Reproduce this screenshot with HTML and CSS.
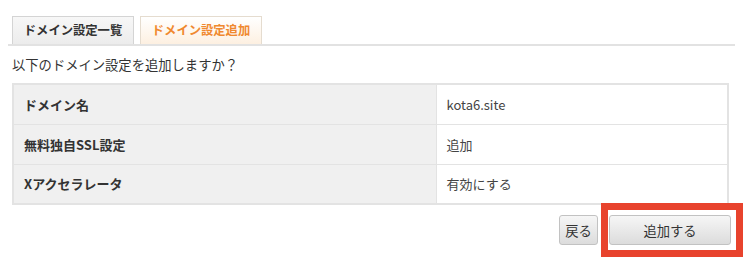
FILE: index.html
```html
<!DOCTYPE html>
<html lang="ja">
<head>
<meta charset="utf-8">
<link rel="stylesheet" href="styles.css">
</head>
<body>
<div class="page">
  <div class="tabs">
    <div class="tab tab-list">ドメイン設定一覧</div>
    <div class="tab tab-active">ドメイン設定追加</div>
  </div>
  <p class="message">以下のドメイン設定を追加しますか？</p>
  <table class="confirm">
    <tr><th>ドメイン名</th><td>kota6.site</td></tr>
    <tr><th>無料独自SSL設定</th><td>追加</td></tr>
    <tr><th>Xアクセラレータ</th><td>有効にする</td></tr>
  </table>
  <div class="actions">
    <button class="btn btn-back">戻る</button>
    <button class="btn btn-add">追加する</button>
    <span class="highlight"></span>
  </div>
</div>
</body>
</html>
```
FILE: styles.css
```css
* { box-sizing: border-box; }
html, body { margin: 0; padding: 0; background: #fff; }
body {
  font-family: "Noto Sans CJK JP", "Noto Sans", sans-serif;
  color: #333;
  width: 750px;
  height: 277px;
  overflow: hidden;
}
.page { padding: 16px 0 0 8px; width: 735px; }
.tabs {
  display: flex;
  gap: 6px;
  padding-left: 4px;
  border-bottom: 2px solid #e2e2e2;
  height: 30px;
}
.tab {
  height: 28px;
  padding: 0 8px;
  border: 1px solid #d4d4d4;
  border-bottom: none;
  font-size: 12.3px;
  font-weight: bold;
  line-height: 27px;
  white-space: nowrap;
  width: 122px;
  text-align: center;
}
.tab-list {
  background: linear-gradient(#f7f7f7, #ececec);
  color: #333;
}
.tab-active {
  background: linear-gradient(#ffffff, #fdf0e1);
  color: #f0892f;
  border-color: #e5dccf;
}
.message {
  margin: 10px 0 0 4px;
  font-size: 13.3px;
  line-height: 18px;
  color: #333;
}
.confirm {
  margin: 9px 0 0 4px;
  width: 717px;
  border-collapse: collapse;
  border: 2px solid #e3e3e3;
  font-size: 13px;
}
.confirm th, .confirm td {
  border: 1px solid #e3e3e3;
  height: 40px;
  padding: 0 10px;
  text-align: left;
  vertical-align: middle;
}
.confirm th {
  width: 423px;
  background: #f0f0f0;
  font-weight: bold;
  color: #333;
}
.confirm td {
  background: #fff;
  color: #444;
  font-weight: normal;
}
.actions {
  position: relative;
  display: flex;
  justify-content: flex-end;
  gap: 11px;
  margin-top: 10px;
  padding-right: 4px;
}
.btn {
  font-family: inherit;
  height: 30px;
  font-size: 13.3px;
  color: #333;
  background: linear-gradient(#f6f6f6, #dcdcdc);
  border: 1px solid #c2c2c2;
  border-radius: 3px;
  padding: 0;
  cursor: pointer;
}
.btn-back { width: 39px; }
.btn-add { width: 122px; }
.highlight {
  position: absolute;
  left: 593px;
  top: -12px;
  width: 142px;
  height: 54px;
  border: 7px solid #e8432d;
  pointer-events: none;
}
```
